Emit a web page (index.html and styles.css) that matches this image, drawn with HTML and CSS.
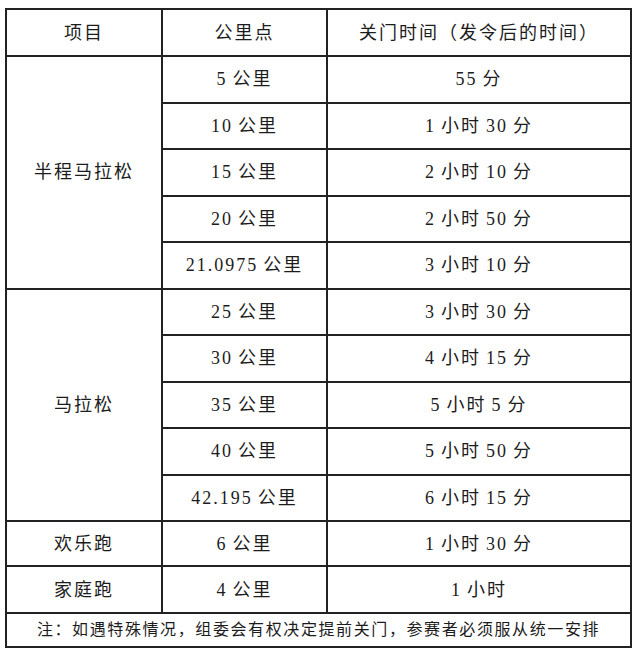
FILE: index.html
```html
<!DOCTYPE html>
<html lang="zh">
<head>
<meta charset="utf-8">
<link rel="stylesheet" href="styles.css">
</head>
<body>
<table class="sched">
  <colgroup>
    <col class="c1"><col class="c2"><col class="c3">
  </colgroup>
  <tr class="head">
    <td>项目</td><td>公里点</td><td>关门时间（发令后的时间）</td>
  </tr>
  <tr class="row">
    <td rowspan="5">半程马拉松</td><td>5<span class="sp"></span>公里</td><td>55<span class="sp"></span>分</td>
  </tr>
  <tr class="row"><td>10<span class="sp"></span>公里</td><td>1<span class="sp"></span>小时<span class="sp"></span>30<span class="sp"></span>分</td></tr>
  <tr class="row"><td>15<span class="sp"></span>公里</td><td>2<span class="sp"></span>小时<span class="sp"></span>10<span class="sp"></span>分</td></tr>
  <tr class="row"><td>20<span class="sp"></span>公里</td><td>2<span class="sp"></span>小时<span class="sp"></span>50<span class="sp"></span>分</td></tr>
  <tr class="row"><td>21.0975<span class="sp"></span>公里</td><td>3<span class="sp"></span>小时<span class="sp"></span>10<span class="sp"></span>分</td></tr>
  <tr class="row">
    <td rowspan="5">马拉松</td><td>25<span class="sp"></span>公里</td><td>3<span class="sp"></span>小时<span class="sp"></span>30<span class="sp"></span>分</td>
  </tr>
  <tr class="row"><td>30<span class="sp"></span>公里</td><td>4<span class="sp"></span>小时<span class="sp"></span>15<span class="sp"></span>分</td></tr>
  <tr class="row"><td>35<span class="sp"></span>公里</td><td>5<span class="sp"></span>小时<span class="sp"></span>5<span class="sp"></span>分</td></tr>
  <tr class="row"><td>40<span class="sp"></span>公里</td><td>5<span class="sp"></span>小时<span class="sp"></span>50<span class="sp"></span>分</td></tr>
  <tr class="row"><td>42.195<span class="sp"></span>公里</td><td>6<span class="sp"></span>小时<span class="sp"></span>15<span class="sp"></span>分</td></tr>
  <tr class="row-b"><td>欢乐跑</td><td>6<span class="sp"></span>公里</td><td>1<span class="sp"></span>小时<span class="sp"></span>30<span class="sp"></span>分</td></tr>
  <tr class="row-c"><td>家庭跑</td><td>4<span class="sp"></span>公里</td><td>1<span class="sp"></span>小时</td></tr>
  <tr class="note"><td colspan="3">注：如遇特殊情况，组委会有权决定提前关门，参赛者必须服从统一安排</td></tr>
</table>
</body>
</html>
```

FILE: styles.css
```css
html, body {
  margin: 0;
  padding: 0;
  background: #fff;
}
body {
  padding: 8px 0 0 5px;
}
.sched {
  border-collapse: collapse;
  table-layout: fixed;
  width: 625px;
  font-family: "Liberation Serif", "Noto Sans CJK SC", serif;
  font-size: 18px;
  color: #1c1c1c;
  letter-spacing: 2px;
}
.c1 { width: 156px; }
.c2 { width: 165px; }
.c3 { width: 304px; }
.sched td {
  border: 2px solid #222;
  text-align: center;
  vertical-align: middle;
  padding: 0;
  line-height: 20px;
}
.sp {
  display: inline-block;
  width: 5px;
}
.head { height: 47px; }
.row { height: 46.5px; }
.row-b { height: 45px; }
.row-c { height: 47px; }
.note { height: 34px; }
.note td {
  font-size: 16px;
  letter-spacing: 1.6px;
}
```
